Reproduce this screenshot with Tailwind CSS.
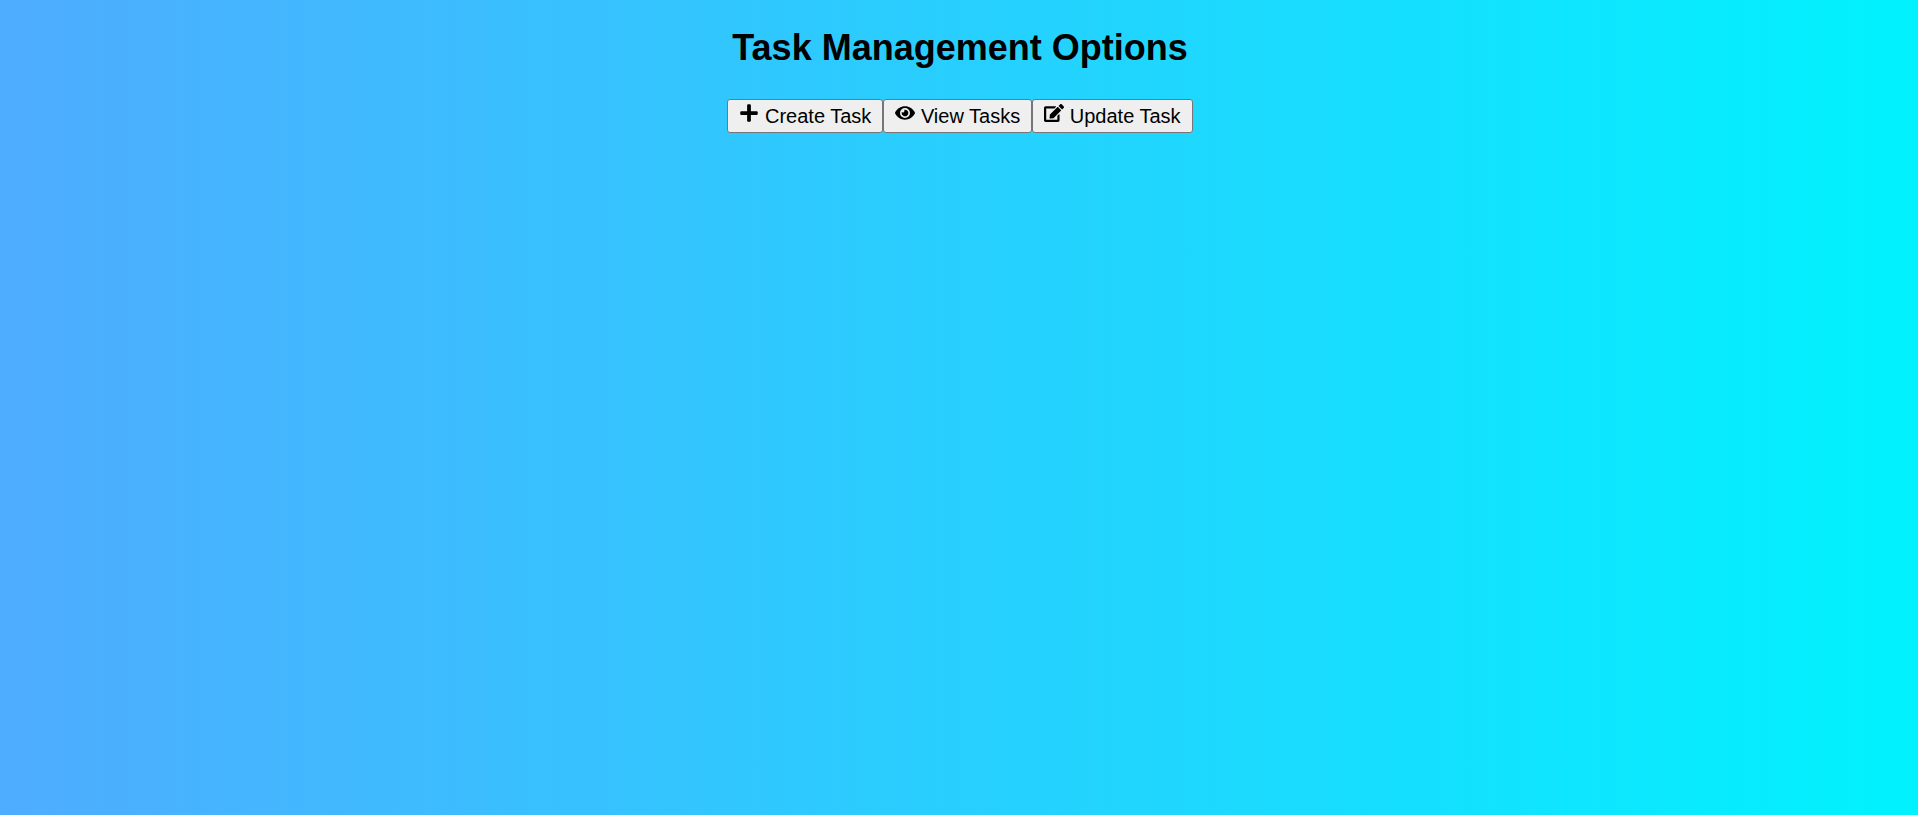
<!DOCTYPE html>
<html lang="en">
<head>
<meta charset="utf-8">
<title>Task Management Options</title>
<script src="https://cdn.jsdelivr.net/npm/@tailwindcss/browser@4"></script>
</head>
<body class="flex min-h-screen flex-col items-center bg-[linear-gradient(to_right,#4facfe,#00f2fe)] py-6 pr-5 pl-[22px] font-['Liberation_Sans',Arial,sans-serif] text-black">
<h1 class="mb-[27px] text-4xl leading-12 font-bold">Task Management Options</h1>
<div class="flex flex-wrap justify-center">
<button type="button" class="rounded-[3px] border border-[#767676] bg-[#efefef] px-[11px] pt-[3px] pb-1 text-xl leading-6"><svg class="inline size-5 align-baseline" viewBox="0 0 448 512" fill="currentColor" aria-hidden="true"><path d="M416 208H272V64c0-17.67-14.33-32-32-32h-32c-17.67 0-32 14.33-32 32v144H32c-17.67 0-32 14.33-32 32v32c0 17.67 14.33 32 32 32h144v144c0 17.67 14.33 32 32 32h32c17.67 0 32-14.33 32-32V304h144c17.67 0 32-14.33 32-32v-32c0-17.67-14.33-32-32-32z"/></svg> Create Task</button>
<button type="button" class="rounded-[3px] border border-[#767676] bg-[#efefef] px-[11px] pt-[3px] pb-1 text-xl leading-6"><svg class="inline size-5 align-baseline" viewBox="0 0 576 512" fill="currentColor" aria-hidden="true"><path d="M572.52 241.4C518.29 135.59 410.93 64 288 64S57.68 135.64 3.48 241.41a32.35 32.35 0 0 0 0 29.19C57.71 376.41 165.07 448 288 448s230.32-71.64 284.52-177.41a32.35 32.35 0 0 0 0-29.19zM288 400a144 144 0 1 1 144-144 143.93 143.93 0 0 1-144 144zm0-240a95.31 95.31 0 0 0-25.31 3.79 47.85 47.85 0 0 1-66.9 66.9A95.78 95.78 0 1 0 288 160z"/></svg> View Tasks</button>
<button type="button" class="rounded-[3px] border border-[#767676] bg-[#efefef] px-[11px] pt-[3px] pb-1 text-xl leading-6"><svg class="inline size-5 align-baseline" viewBox="0 0 576 512" fill="currentColor" aria-hidden="true"><path d="M402.6 83.2l90.2 90.2c3.8 3.8 3.8 10 0 13.8L274.4 405.6l-92.8 10.3c-12.4 1.4-22.9-9.1-21.5-21.5l10.3-92.8L388.8 83.2c3.8-3.8 10-3.8 13.8 0zm162-22.9l-48.8-48.8c-15.2-15.2-39.9-15.2-55.2 0l-35.4 35.4c-3.8 3.8-3.8 10 0 13.8l90.2 90.2c3.8 3.8 10 3.8 13.8 0l35.4-35.4c15.2-15.3 15.2-40 0-55.2zM384 346.2V448H64V128h229.8c3.2 0 6.2-1.3 8.5-3.5l40-40c7.6-7.6 2.2-20.5-8.5-20.5H48C21.5 64 0 85.5 0 112v352c0 26.5 21.5 48 48 48h352c26.5 0 48-21.5 48-48V306.2c0-10.7-12.9-16-20.5-8.5l-40 40c-2.2 2.3-3.5 5.3-3.5 8.5z"/></svg> Update Task</button>
</div>
</body>
</html>
